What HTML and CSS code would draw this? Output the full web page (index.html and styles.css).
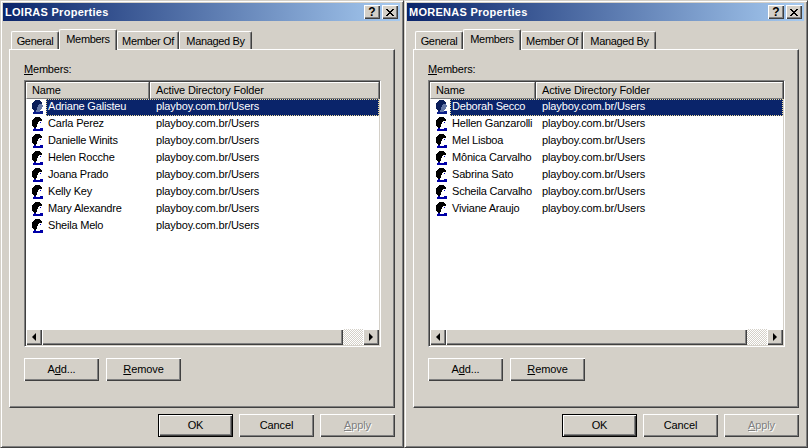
FILE: index.html
```html
<!DOCTYPE html>
<html lang="en">
<head>
<meta charset="utf-8">
<title>Properties</title>
<link rel="stylesheet" href="styles.css">
</head>
<body>
<svg class="defs" width="0" height="0" aria-hidden="true">
  <defs>
    <symbol id="user" viewBox="0 0 16 16" shape-rendering="crispEdges">
      <path fill="#000" d="M5 1h5v1h1v1h1v2H9v1H8v2H7v3H6v1H4v-1H3v-1H2V4h1V3h1V2h1z"/>
      <path fill="#fff" d="M9 5h3v1h1v2h-1v2h-1v1h-1v2H6v-2h1V8h1V6h1z"/>
      <path fill="#0000c0" d="M10 6h1v1h-1z"/>
      <path fill="#0000a8" d="M4 12h2v1h4v-1h3v3H3v-2h1z"/>
    </symbol>
    <symbol id="user-sel" viewBox="0 0 16 16" shape-rendering="crispEdges">
      <path fill="#0a1e5a" d="M5 1h5v1h1v1h1v2H9v1H8v2H7v3H6v1H4v-1H3v-1H2V4h1V3h1V2h1z"/>
      <path fill="#6478a8" d="M9 5h3v1h1v2h-1v2h-1v1h-1v2H6v-2h1V8h1V6h1z"/>
      <path fill="#0a1e8a" d="M4 12h2v1h4v-1h3v3H3v-2h1z"/>
    </symbol>
    <symbol id="close" viewBox="0 0 8 7" shape-rendering="crispEdges">
      <path fill="#000" d="M0 0h2v1h1v1h2V1h1V0h2v1H7v1H6v1H5v1h1v1h1v1h1v1H6V6H5V5H3v1H2v1H0V6h1V5h1V4h1V3H2V2H1V1H0z"/>
    </symbol>
  </defs>
</svg>
<main class="desktop">

<section class="window">
  <header class="titlebar">
    <h1 class="title">LOIRAS Properties</h1>
    <div class="caption-buttons">
      <button class="caption-btn">?</button>
      <button class="caption-btn" aria-label="Close"><svg class="close-icon"><use href="#close"/></svg></button>
    </div>
  </header>
  <nav class="tabs">
    <span class="tab tab-general">General</span>
    <span class="tab tab-members tab-active">Members</span>
    <span class="tab tab-memberof">Member Of</span>
    <span class="tab tab-managed">Managed By</span>
  </nav>
  <div class="pane">
    <p class="label"><u>M</u>embers:</p>
    <div class="list">
      <div class="list-head">
        <span class="col col-name">Name</span>
        <span class="col col-folder">Active Directory Folder</span>
      </div>
      <ul class="rows">
        <li class="row row-sel"><svg class="icon"><use href="#user-sel"/></svg><span class="cell-name">Adriane Galisteu</span><span class="cell-folder">playboy.com.br/Users</span></li>
        <li class="row"><svg class="icon"><use href="#user"/></svg><span class="cell-name">Carla Perez</span><span class="cell-folder">playboy.com.br/Users</span></li>
        <li class="row"><svg class="icon"><use href="#user"/></svg><span class="cell-name">Danielle Winits</span><span class="cell-folder">playboy.com.br/Users</span></li>
        <li class="row"><svg class="icon"><use href="#user"/></svg><span class="cell-name">Helen Rocche</span><span class="cell-folder">playboy.com.br/Users</span></li>
        <li class="row"><svg class="icon"><use href="#user"/></svg><span class="cell-name">Joana Prado</span><span class="cell-folder">playboy.com.br/Users</span></li>
        <li class="row"><svg class="icon"><use href="#user"/></svg><span class="cell-name">Kelly Key</span><span class="cell-folder">playboy.com.br/Users</span></li>
        <li class="row"><svg class="icon"><use href="#user"/></svg><span class="cell-name">Mary Alexandre</span><span class="cell-folder">playboy.com.br/Users</span></li>
        <li class="row"><svg class="icon"><use href="#user"/></svg><span class="cell-name">Sheila Melo</span><span class="cell-folder">playboy.com.br/Users</span></li>
      </ul>
      <div class="hscroll">
        <span class="sb-btn"><span class="arrow-left"></span></span>
        <span class="sb-thumb"></span>
        <span class="sb-track"></span>
        <span class="sb-btn"><span class="arrow-right"></span></span>
      </div>
    </div>
    <div class="pane-actions">
      <button class="btn"><span>A<u>d</u>d...</span></button>
      <button class="btn"><span><u>R</u>emove</span></button>
    </div>
  </div>
  <footer class="footer">
    <button class="btn btn-default">OK</button>
    <button class="btn">Cancel</button>
    <button class="btn btn-disabled"><span><u>A</u>pply</span></button>
  </footer>
</section>

<section class="window">
  <header class="titlebar">
    <h1 class="title">MORENAS Properties</h1>
    <div class="caption-buttons">
      <button class="caption-btn">?</button>
      <button class="caption-btn" aria-label="Close"><svg class="close-icon"><use href="#close"/></svg></button>
    </div>
  </header>
  <nav class="tabs">
    <span class="tab tab-general">General</span>
    <span class="tab tab-members tab-active">Members</span>
    <span class="tab tab-memberof">Member Of</span>
    <span class="tab tab-managed">Managed By</span>
  </nav>
  <div class="pane">
    <p class="label"><u>M</u>embers:</p>
    <div class="list list-narrow">
      <div class="list-head">
        <span class="col col-name">Name</span>
        <span class="col col-folder">Active Directory Folder</span>
      </div>
      <ul class="rows">
        <li class="row row-sel"><svg class="icon"><use href="#user-sel"/></svg><span class="cell-name">Deborah Secco</span><span class="cell-folder">playboy.com.br/Users</span></li>
        <li class="row"><svg class="icon"><use href="#user"/></svg><span class="cell-name">Hellen Ganzarolli</span><span class="cell-folder">playboy.com.br/Users</span></li>
        <li class="row"><svg class="icon"><use href="#user"/></svg><span class="cell-name">Mel Lisboa</span><span class="cell-folder">playboy.com.br/Users</span></li>
        <li class="row"><svg class="icon"><use href="#user"/></svg><span class="cell-name">Mônica Carvalho</span><span class="cell-folder">playboy.com.br/Users</span></li>
        <li class="row"><svg class="icon"><use href="#user"/></svg><span class="cell-name">Sabrina Sato</span><span class="cell-folder">playboy.com.br/Users</span></li>
        <li class="row"><svg class="icon"><use href="#user"/></svg><span class="cell-name">Scheila Carvalho</span><span class="cell-folder">playboy.com.br/Users</span></li>
        <li class="row"><svg class="icon"><use href="#user"/></svg><span class="cell-name">Viviane Araujo</span><span class="cell-folder">playboy.com.br/Users</span></li>
      </ul>
      <div class="hscroll">
        <span class="sb-btn"><span class="arrow-left"></span></span>
        <span class="sb-thumb"></span>
        <span class="sb-track"></span>
        <span class="sb-btn"><span class="arrow-right"></span></span>
      </div>
    </div>
    <div class="pane-actions">
      <button class="btn"><span>A<u>d</u>d...</span></button>
      <button class="btn"><span><u>R</u>emove</span></button>
    </div>
  </div>
  <footer class="footer">
    <button class="btn btn-default">OK</button>
    <button class="btn">Cancel</button>
    <button class="btn btn-disabled"><span><u>A</u>pply</span></button>
  </footer>
</section>

</main>
</body>
</html>
```

FILE: styles.css
```css
* { box-sizing: border-box; }
html, body { margin: 0; padding: 0; }
body {
  width: 808px;
  height: 448px;
  overflow: hidden;
  background: #d4d0c8;
  font: 11px/13px "Liberation Sans", Arial, sans-serif;
  letter-spacing: -0.15px;
  color: #000;
}
.defs { position: absolute; }
.desktop { display: flex; width: 808px; height: 448px; }

.window {
  width: 404px;
  height: 448px;
  flex: none;
  display: flex;
  flex-direction: column;
  background: #d4d0c8;
  padding: 3px 3px 2px;
  border-top: 1px solid #d4d0c8;
  border-left: 1px solid #d4d0c8;
  border-right: 1px solid #404040;
  border-bottom: 1px solid #404040;
  box-shadow: inset 1px 1px 0 #fff, inset -1px -1px 0 #808080;
}
.window > .titlebar { margin: -1px 0 0 -1px; }

.titlebar {
  height: 18px;
  flex: none;
  display: flex;
  align-items: center;
  justify-content: space-between;
  padding: 0 2px;
  background: linear-gradient(90deg, #0a246a, #a6caf0);
}
.title {
  margin: 0;
  font: bold 11px/13px "Liberation Sans", Arial, sans-serif;
  letter-spacing: 0.27px;
  color: #fff;
}
.caption-buttons { display: flex; gap: 2px; }
.caption-btn {
  width: 16px;
  height: 14px;
  padding: 0;
  border: 0;
  background: #d4d0c8;
  box-shadow: inset 1px 1px 0 #fff, inset -1px -1px 0 #404040, inset -2px -2px 0 #808080;
  font: bold 12px/13px "Liberation Sans", Arial, sans-serif;
  color: #000;
  display: flex;
  align-items: center;
  justify-content: center;
}
.close-icon { width: 8px; height: 7px; margin-right: 1px; }

.tabs {
  display: flex;
  height: 28px;
  flex: none;
  align-items: flex-end;
  padding-left: 7px;
  position: relative;
  z-index: 1;
}
.tab {
  height: 18px;
  padding-top: 3px;
  text-align: center;
  background: #d4d0c8;
  border-top: 1px solid #fff;
  border-left: 1px solid #fff;
  border-right: 1px solid #404040;
  border-radius: 2px 2px 0 0;
  box-shadow: inset -1px 0 0 #808080;
  white-space: nowrap;
  letter-spacing: -0.35px;
}
.tab-general { width: 48px; }
.tab-members { width: 58px; }
.tab-memberof { width: 62px; }
.tab-managed { width: 73px; }
.tab-active {
  height: 21px;
  margin-bottom: -1px;
}

.pane {
  flex: none;
  height: 359px;
  margin: 0 5px 0 5px;
  padding: 13px 14px 0 15px;
  border-top: 1px solid #fff;
  border-left: 1px solid #fff;
  border-right: 1px solid #404040;
  border-bottom: 1px solid #404040;
  box-shadow: inset -1px -1px 0 #808080;
  display: flex;
  flex-direction: column;
}
.label { margin: 0 0 4px -1px; height: 13px; letter-spacing: -0.2px; }

.list {
  width: 357px;
  height: 267px;
  flex: none;
  margin-left: -1px;
  display: flex;
  flex-direction: column;
  background: #fff;
  border-top: 1px solid #808080;
  border-left: 1px solid #808080;
  border-right: 1px solid #fff;
  border-bottom: 1px solid #fff;
  box-shadow: inset 1px 1px 0 #404040, inset -1px -1px 0 #d4d0c8;
  padding: 1px;
}
.list-head {
  display: flex;
  height: 17px;
  flex: none;
  background: #d4d0c8;
}
.col {
  height: 17px;
  padding: 1px 0 0 5px;
  border-top: 1px solid #fff;
  border-left: 1px solid #fff;
  border-right: 1px solid #808080;
  border-bottom: 1px solid #808080;
  box-shadow: 1px 0 0 #404040;
}
.col-name { width: 123px; margin-right: 1px; }
.col-folder { flex: 1; }
.list-narrow .col-name { width: 105px; }

.rows { list-style: none; margin: 0; padding: 0; flex: 1; overflow: hidden; }
.row { height: 17px; display: flex; align-items: flex-start; padding-left: 4px; white-space: nowrap; line-height: 15px; position: relative; }
.icon { width: 16px; height: 16px; flex: none; }
.cell-name { width: 110px; padding-left: 2px; flex: none; letter-spacing: -0.2px; }
.list-narrow .cell-name { width: 92px; }
.cell-folder { letter-spacing: -0.12px; }

.row-sel {
  background: linear-gradient(#fff, #fff) 0 0 / 20px 100% no-repeat, #0a246a;
  color: #fff;
}
.row-sel::after {
  content: "";
  position: absolute;
  inset: 0 0 0 20px;
  border: 1px dotted #f0dc9a;
}

.hscroll { display: flex; height: 16px; flex: none; background: #d4d0c8; }
.sb-btn {
  width: 16px;
  height: 16px;
  flex: none;
  display: flex;
  align-items: center;
  justify-content: center;
  background: #d4d0c8;
  box-shadow: inset 1px 1px 0 #fff, inset -1px -1px 0 #404040, inset -2px -2px 0 #808080;
}
.sb-thumb {
  flex: 1;
  background: #d4d0c8;
  box-shadow: inset 1px 1px 0 #fff, inset -1px -1px 0 #404040, inset -2px -2px 0 #808080;
}
.sb-track {
  width: 20px;
  flex: none;
  background: repeating-conic-gradient(#d4d0c8 0 25%, #fff 0 50%) 0 0 / 2px 2px;
}
.arrow-left, .arrow-right { width: 0; height: 0; border-style: solid; border-color: transparent; }
.arrow-left { border-width: 4px 4px 4px 0; border-right-color: #000; }
.arrow-right { border-width: 4px 0 4px 4px; border-left-color: #000; }

.pane-actions { display: flex; gap: 7px; margin: 11px 0 0 -1px; }

.btn {
  width: 75px;
  height: 23px;
  padding: 0;
  border: 0;
  background: #d4d0c8;
  box-shadow: inset 1px 1px 0 #fff, inset -1px -1px 0 #404040, inset -2px -2px 0 #808080;
  font: 11px/13px "Liberation Sans", Arial, sans-serif;
  letter-spacing: -0.1px;
  color: #000;
}
.btn-default {
  box-shadow: inset 0 0 0 1px #000, inset 2px 2px 0 #fff, inset -2px -2px 0 #404040, inset -3px -3px 0 #808080;
}
.btn-disabled { color: #808080; text-shadow: 1px 1px 0 #fff; }

.footer {
  display: flex;
  justify-content: flex-end;
  gap: 6px;
  margin-top: 6px;
  padding-right: 5px;
}
```
